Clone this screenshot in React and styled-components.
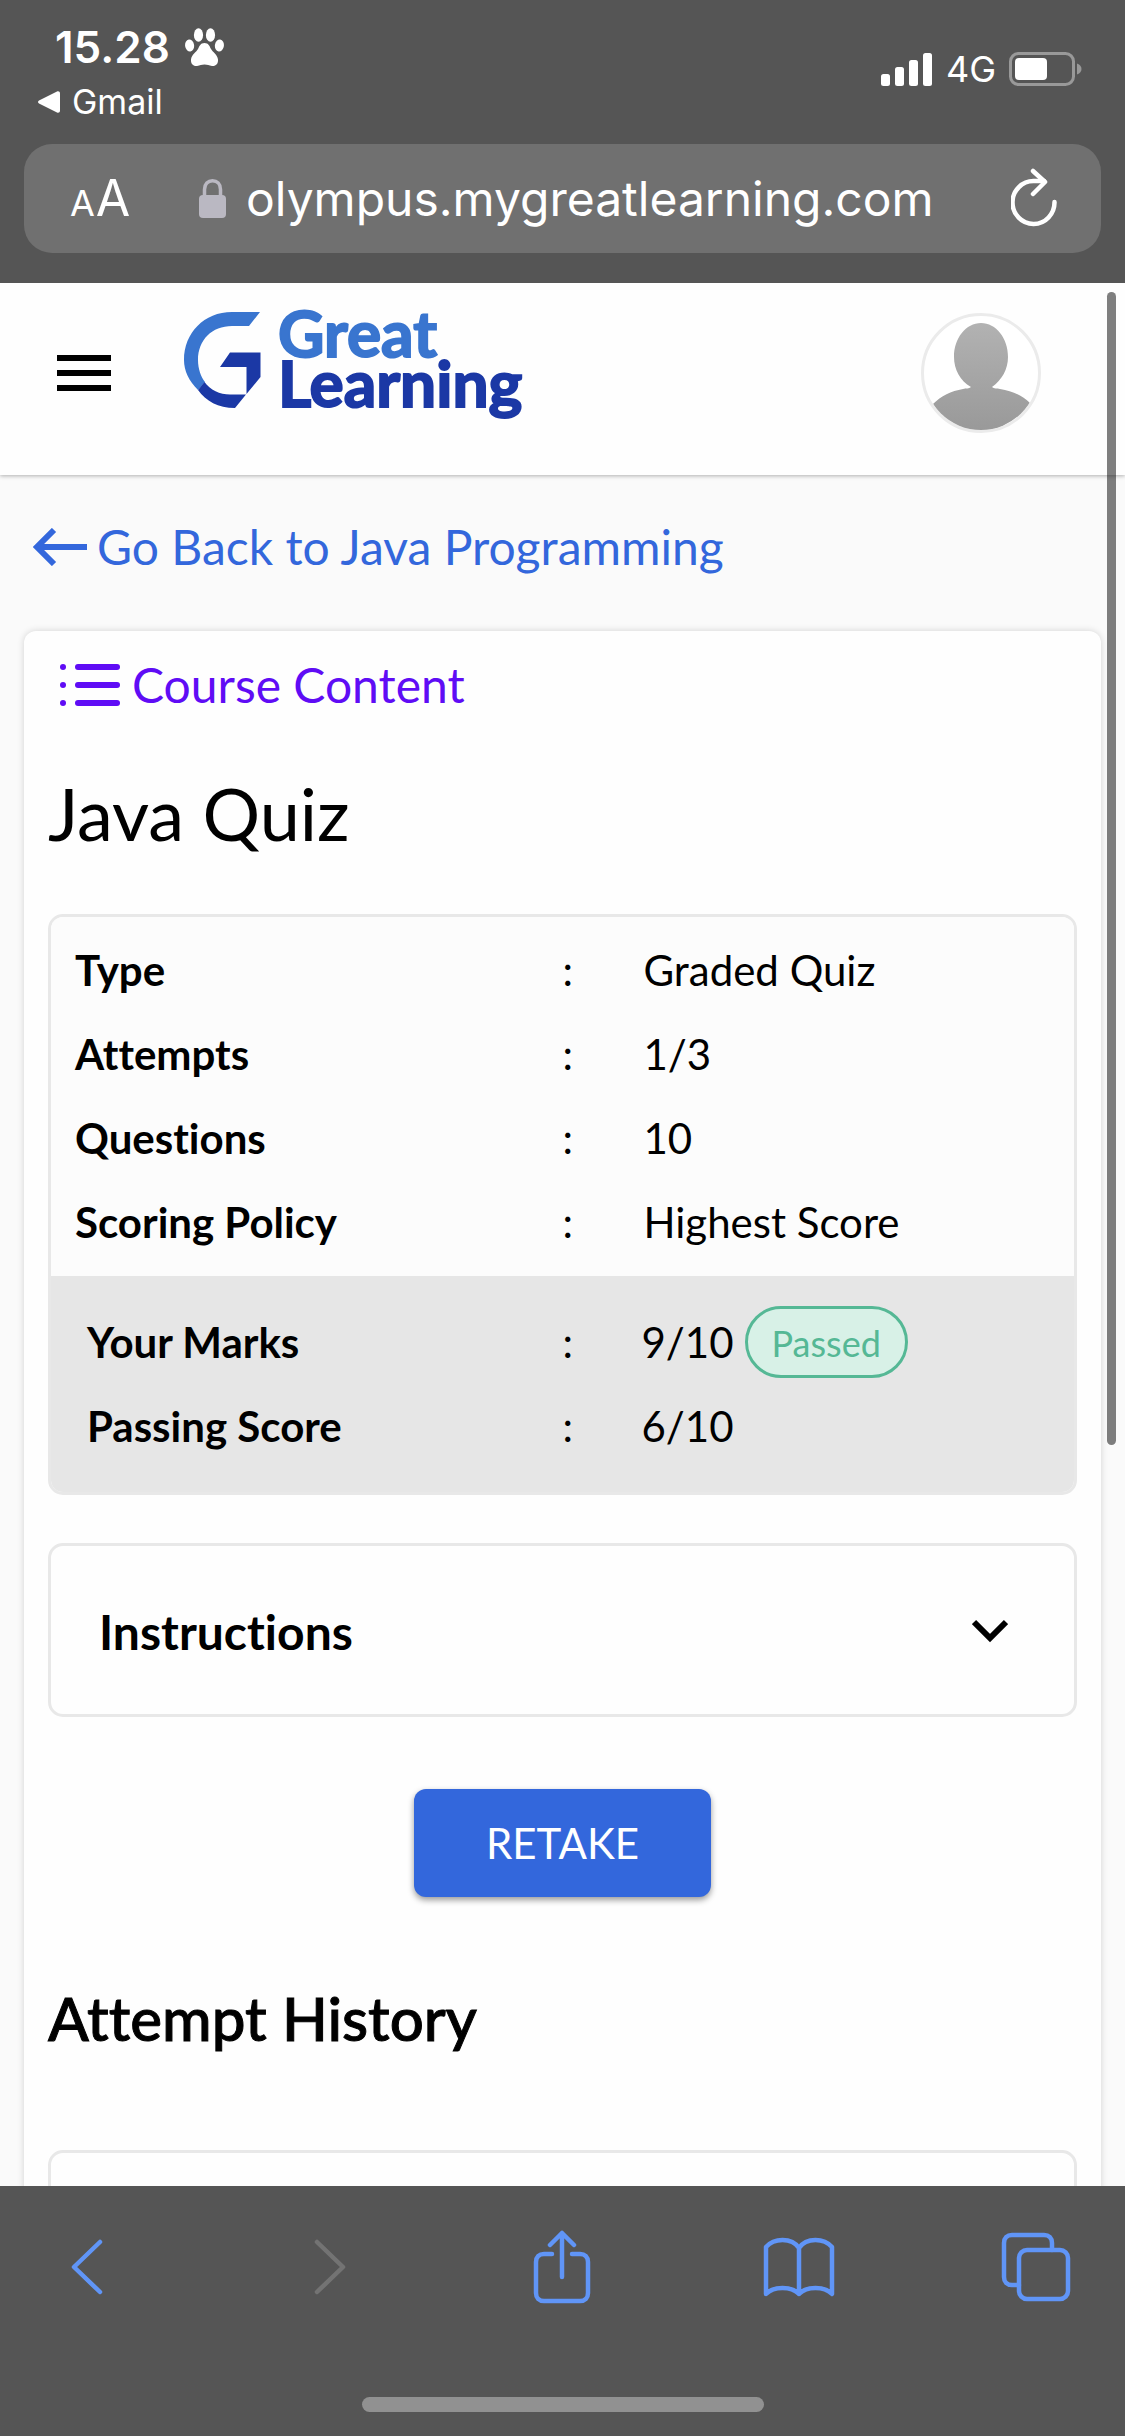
import React from 'react';
import styled, { createGlobalStyle } from 'styled-components';

const ui = '"Inter", "Liberation Sans", sans-serif';
const body = '"Lato", "Open Sans", sans-serif';

const GlobalStyle = createGlobalStyle`
  *, *::before, *::after { box-sizing: border-box; }
  body { margin: 0; background: #555; font-family: ${body}; color: #000; font-variant-ligatures: none; }
  button, input { font: inherit; font-variant-ligatures: none; color: inherit; background: none; border: 0; padding: 0; margin: 0; }
  h1, h2 { margin: 0; }
  svg { display: block; flex: none; }
`;

const Screen = styled.div`
  display: flex;
  flex-direction: column;
  height: 100vh;
`;

/* Browser chrome */
const TopBar = styled.header`
  flex: none;
  background: #555;
  color: #fff;
  font-family: ${ui};
  padding: 22px 24px 30px;
`;
const StatusRow = styled.div`
  display: flex;
  justify-content: space-between;
  align-items: flex-start;
  height: 122px;
`;
const StatusLeft = styled.div`
  padding-left: 14px;
`;
const Clock = styled.div`
  display: flex;
  align-items: center;
  gap: 15px;
  padding-left: 17px;
  font-size: 44px;
  line-height: 50px;
  font-weight: 600;
`;
const ReturnLink = styled.a`
  display: flex;
  align-items: center;
  gap: 12px;
  margin-top: 9px;
  font-size: 34px;
  line-height: 42px;
  color: inherit;
  text-decoration: none;
`;
const StatusRight = styled.div`
  display: flex;
  align-items: center;
  gap: 13px;
  padding: 25px 19px 0 0;
  font-size: 36px;
  line-height: 44px;
`;
const AddressBar = styled.div`
  display: flex;
  align-items: center;
  height: 109px;
  padding: 0 44px 0 46px;
  border-radius: 28px;
  background: #707070;
`;
const TextSizeButton = styled.button`
  display: flex;
  align-items: baseline;
  gap: 1px;
  width: 129px;
  padding-top: 3px;
  line-height: 60px;
`;
const Letter = styled.span`
  font-size: ${(p) => (p.$large ? 50 : 36)}px;
`;
const UrlField = styled.input`
  flex: 1;
  min-width: 0;
  height: 72px;
  margin-left: 20px;
  font-size: 48px;
  outline: none;
`;
const IconButton = styled.button`
  display: flex;
  align-items: center;
  justify-content: center;
`;

/* Site */
const Viewport = styled.div`
  position: relative;
  flex: 1;
  min-height: 0;
  overflow: hidden;
  background: #fafafa;
`;
const ScrollThumb = styled.div`
  position: absolute;
  z-index: 2;
  top: 9px;
  right: 9px;
  width: 9px;
  height: 1153px;
  border-radius: 5px;
  background: rgba(0, 0, 0, 0.5);
`;
const SiteHeader = styled.div`
  display: flex;
  align-items: center;
  height: 192px;
  padding: 0 84px 12px 57px;
  background: #fefefe;
  box-shadow: 0 1px 4px rgba(0, 0, 0, 0.3);
`;
const LogoLink = styled.a`
  display: flex;
  align-items: flex-end;
  gap: 17px;
  margin: 0 auto 0 73px;
  padding-bottom: 30px;
  font-size: 64px;
  line-height: 50px;
  font-weight: 700;
  -webkit-text-stroke: 2px currentColor;
  text-decoration: none;
`;
const LogoWord = styled.span`
  display: block;
  color: ${(p) => p.$tone};
  -webkit-text-stroke-color: ${(p) => p.$tone};
`;
const Avatar = styled.button`
  width: 120px;
  height: 120px;
  border: 3px solid #ebebeb;
  border-radius: 50%;
  background: #fff;
  overflow: hidden;
`;
const BackLink = styled.a`
  display: flex;
  align-items: center;
  gap: 9px;
  padding: 42px 33px 54px;
  font-size: 48px;
  line-height: 60px;
  color: #3367dc;
  text-decoration: none;
`;
const Card = styled.main`
  margin: 0 24px;
  padding: 24px 24px 90px;
  border-radius: 12px;
  background: #fefefe;
  box-shadow: 0 0 7px rgba(0, 0, 0, 0.16);
`;
const ContentLink = styled.a`
  display: flex;
  align-items: center;
  gap: 12px;
  padding-left: 12px;
  font-size: 48px;
  line-height: 60px;
  color: #5f0cf5;
  text-decoration: none;
`;
const Title = styled.h1`
  margin: 56px 0 59px;
  font-size: 72px;
  line-height: 84px;
  font-weight: 400;
`;
const Panel = styled.section`
  border: 3px solid #e8e8e8;
  border-radius: 15px;
  overflow: hidden;
`;
const Facts = styled.table`
  width: 100%;
  table-layout: fixed;
  border-collapse: collapse;
  font-size: 42px;
  line-height: 48px;
`;
const Group = styled.div`
  padding: ${(p) => (p.$shaded ? '24px 0 24px' : '11px 0 12px')};
  background: ${(p) => (p.$shaded ? '#e6e6e6' : '#fcfcfc')};
`;
const Label = styled.th`
  width: 50%;
  height: 84px;
  padding: 0 0 0 ${(p) => (p.$shaded ? 36 : 24)}px;
  text-align: left;
  font-weight: 700;
`;
const Colon = styled.td`
  width: ${(p) => (p.$shaded ? 79 : 81)}px;
  padding: 0;
`;
const Value = styled.td`
  padding: 0;
`;
const ValueLine = styled.div`
  display: flex;
  align-items: center;
  gap: 11px;
`;
const Pill = styled.span`
  height: 72px;
  padding: 0 24px;
  border: 3px solid #55b895;
  border-radius: 36px;
  background: #d8f1e7;
  color: #55b895;
  font-size: 36px;
  line-height: 68px;
`;
const Accordion = styled.button`
  display: flex;
  align-items: center;
  justify-content: space-between;
  width: 100%;
  height: 174px;
  margin-top: 48px;
  padding: 2px 66px 0 48px;
  border: 3px solid #e8e8e8;
  border-radius: 15px;
  font-size: 48px;
  font-weight: 700;
`;
const Retake = styled.button`
  display: block;
  width: 297px;
  height: 108px;
  margin: 72px auto 85px;
  border-radius: 12px;
  background: #3367dc;
  color: #fff;
  font-size: 42px;
  box-shadow: 0 3px 6px rgba(0, 0, 0, 0.4);
`;
const Subtitle = styled.h2`
  margin-bottom: 96px;
  font-size: 60px;
  line-height: 72px;
  font-weight: 500;
  -webkit-text-stroke: 1px currentColor;
`;
const HistoryPanel = styled(Panel)`
  height: 240px;
`;

const BottomBar = styled.footer`
  flex: none;
  height: 250px;
  background: #555;
`;
const Tools = styled.nav`
  display: flex;
  justify-content: space-between;
  align-items: center;
  padding: 38px 53px 0 51px;
  height: 124px;
`;
const ToolButton = styled(IconButton)`
  width: 72px;
  height: 84px;
  color: ${(p) => (p.disabled ? '#737373' : '#6095f7')};
`;
const HomeIndicator = styled.div`
  width: 402px;
  height: 15px;
  margin: 87px auto 0;
  border-radius: 8px;
  background: #919191;
`;

const Paw = () => (
  <svg width="39" height="39" viewBox="0 0 39 39" fill="#fff" aria-hidden="true">
    <ellipse cx="4.6" cy="17.5" rx="4.5" ry="6" transform="rotate(-8 4.6 17.5)" />
    <ellipse cx="13.5" cy="7" rx="4.6" ry="6.8" />
    <ellipse cx="25.5" cy="7" rx="4.6" ry="6.8" />
    <ellipse cx="34.4" cy="17.5" rx="4.5" ry="6" transform="rotate(8 34.4 17.5)" />
    <path d="M19.500 15c-4 0-5 3-6.500 6-1.500 3-6.500 5.500-7 10.500C5.600 36 8.500 38.500 12 38c3-.4 4.500-1.500 7.500-1.500s4.500 1.100 7.500 1.500c3.500.5 6.400-2 6-6.500-.5-5-5.500-7.500-7-10.500S23.500 15 19.500 15z" />
  </svg>
);
const Signal = () => (
  <svg width="52" height="33" viewBox="0 0 52 33" fill="#fff" aria-hidden="true">
    <rect x="0" y="21" width="9" height="12" rx="2.500" />
    <rect x="14" y="14" width="9" height="19" rx="2.500" />
    <rect x="28" y="7" width="9" height="26" rx="2.500" />
    <rect x="42" y="0" width="9" height="33" rx="2.500" />
  </svg>
);
const Battery = () => (
  <svg width="73" height="34" viewBox="0 0 73 34" aria-hidden="true">
    <rect x="1.500" y="1.500" width="63" height="31" rx="8" fill="none" stroke="#999" strokeWidth="3" />
    <rect x="6" y="6" width="32" height="22" rx="4" fill="#fff" />
    <path d="M68 11.500c3 1 4.500 3 4.500 5.500s-1.500 4.500-4.500 5.500z" fill="#999" />
  </svg>
);
const Lock = () => (
  <svg width="27" height="39" viewBox="0 0 27 39" aria-hidden="true">
    <path d="M5.500 18v-7.500C5.500 5 9 1.800 13.500 1.800S21.500 5 21.500 10.500V18" fill="none" stroke="#bab8c2" strokeWidth="3.500" />
    <rect y="16" width="27" height="23" rx="4" fill="#bab8c2" />
  </svg>
);
const Reload = () => (
  <svg width="46" height="62" viewBox="0 0 46 62" fill="none" stroke="#fff" strokeWidth="4.500" strokeLinecap="round" strokeLinejoin="round" aria-hidden="true">
    <path d="M43.500 34A21 21.500 0 1 1 23 13h10" />
    <path d="M22 3 34 14 22 26" />
  </svg>
);
const MenuIcon = () => (
  <svg width="54" height="36" viewBox="0 0 54 36" aria-hidden="true">
    <path d="M0 3h54M0 18h54M0 33h54" stroke="#000" strokeWidth="6" />
  </svg>
);
const LogoMark = () => (
  <svg width="77" height="96" viewBox="0 0 77 96" aria-hidden="true">
    <path d="M76 0H48C20 0 0 21 0 48c0 11 5 21 14 30l7-8c-4-5-7-13-7-22 0-20 14-34 34-34h17z" fill="#3975cf" />
    <path d="M20.500 70 14 78c8 11 20 18 37 18L62 82.500H46C36 82.500 26 78 20.500 70z" fill="#1b38a5" />
    <path d="M46 40.500h30.500V65L62.500 82V55H36z" fill="#1b38a5" />
  </svg>
);
const Person = () => (
  <svg width="114" height="114" viewBox="0 0 114 114" aria-hidden="true">
    <defs>
      <linearGradient id="person" x1="0" y1="0" x2="0" y2="1">
        <stop offset="0" stopColor="#b2b2b2" />
        <stop offset="1" stopColor="#999" />
      </linearGradient>
    </defs>
    <path
      d="M57 7c15 0 27 15 27 34 0 12-6 23-16 30 2 2 5 1 8 2 13 2 23 7 30 14C96 103 77 115 57 115S18 104 9 88c8-8 18-13 30-15 3-1 6 0 8-2C36 65 30 53 30 41 30 22 42 7 57 7z"
      fill="url(#person)"
    />
  </svg>
);
const BackArrow = () => (
  <svg width="55" height="38" viewBox="0 0 55 38" fill="none" stroke="#3367dc" strokeWidth="6" aria-hidden="true">
    <path d="M21 2 4 19l17 17M4 19h50" />
  </svg>
);
const ListIcon = () => (
  <svg width="60" height="43" viewBox="0 0 60 43" fill="#5f0cf5" aria-hidden="true">
    {[3, 21, 39].map((y) => (
      <g key={y}>
        <circle cx="3" cy={y} r="3" />
        <rect x="15" y={y - 3} width="45" height="6" rx="3" />
      </g>
    ))}
  </svg>
);
const ChevronDown = () => (
  <svg width="36" height="24" viewBox="0 0 36 24" fill="none" stroke="#000" strokeWidth="6" aria-hidden="true">
    <path d="M2 3l16 16L34 3" />
  </svg>
);
const Stroke = ({ w, h, children }) => (
  <svg width={w} height={h} viewBox={`0 0 ${w} ${h}`} fill="none" stroke="currentColor" strokeWidth="4.500" strokeLinecap="round" strokeLinejoin="round" aria-hidden="true">
    {children}
  </svg>
);

const details = [
  ['Type', 'Graded Quiz'],
  ['Attempts', '1/3'],
  ['Questions', '10'],
  ['Scoring Policy', 'Highest Score'],
];
const scores = [
  ['Your Marks', '9/10', 'Passed'],
  ['Passing Score', '6/10'],
];

const FactGroup = ({ rows, shaded }) => (
  <Group $shaded={shaded}>
    <Facts>
      <tbody>
        {rows.map(([label, value, tag]) => (
          <tr key={label}>
            <Label scope="row" $shaded={shaded}>{label}</Label>
            <Colon $shaded={shaded}>:</Colon>
            <Value>
              <ValueLine>
                {value}
                {tag && <Pill>{tag}</Pill>}
              </ValueLine>
            </Value>
          </tr>
        ))}
      </tbody>
    </Facts>
  </Group>
);

export default function App() {
  return (
    <Screen>
      <GlobalStyle />
      <TopBar>
        <StatusRow>
          <StatusLeft>
            <Clock>15.28 <Paw /></Clock>
            <ReturnLink href="#gmail">
              <svg width="22" height="22" viewBox="0 0 22 22" fill="#fff" aria-hidden="true">
                <path d="M1 9.500 19 .6c1.500-.7 3 .2 3 1.700v17.400c0 1.500-1.500 2.400-3 1.700L1 12.500c-1.300-.8-1.300-2.200 0-3z" />
              </svg>
              Gmail
            </ReturnLink>
          </StatusLeft>
          <StatusRight>
            <Signal />
            4G
            <Battery />
          </StatusRight>
        </StatusRow>
        <AddressBar>
          <TextSizeButton aria-label="Text size">
            <Letter>A</Letter>
            <Letter $large>A</Letter>
          </TextSizeButton>
          <Lock />
          <UrlField aria-label="Address" readOnly value="olympus.mygreatlearning.com" />
          <IconButton aria-label="Reload"><Reload /></IconButton>
        </AddressBar>
      </TopBar>

      <Viewport>
        <ScrollThumb />
        <SiteHeader>
          <IconButton aria-label="Menu"><MenuIcon /></IconButton>
          <LogoLink href="#home">
            <LogoMark />
            <span>
              <LogoWord $tone="#3975cf">Great</LogoWord>
              <LogoWord $tone="#1b38a5">Learning</LogoWord>
            </span>
          </LogoLink>
          <Avatar aria-label="Profile"><Person /></Avatar>
        </SiteHeader>
        <BackLink href="#course"><BackArrow />Go Back to Java Programming</BackLink>
        <Card>
          <ContentLink href="#content"><ListIcon />Course Content</ContentLink>
          <Title>Java Quiz</Title>
          <Panel>
            <FactGroup rows={details} />
            <FactGroup rows={scores} shaded />
          </Panel>
          <Accordion aria-expanded="false">Instructions<ChevronDown /></Accordion>
          <Retake>RETAKE</Retake>
          <Subtitle>Attempt History</Subtitle>
          <HistoryPanel />
        </Card>
      </Viewport>

      <BottomBar>
        <Tools>
          <ToolButton aria-label="Back">
            <Stroke w={34} h={58}><path d="M30 4 4 29l26 25" /></Stroke>
          </ToolButton>
          <ToolButton aria-label="Forward" disabled>
            <Stroke w={46} h={58}><path d="M16 4l26 25L16 54" /></Stroke>
          </ToolButton>
          <ToolButton aria-label="Share">
            <Stroke w={58} h={74}>
              <path d="M19 24h-8c-5 0-8 3-8 8v31c0 5 3 8 8 8h36c5 0 8-3 8-8V32c0-5-3-8-8-8h-8" />
              <path d="M29 47V3M17 15 29 3l12 12" />
            </Stroke>
          </ToolButton>
          <ToolButton aria-label="Bookmarks">
            <Stroke w={72} h={60}>
              <path d="M36 11C32 5 26 3 19.500 3S7 5.500 3 10v47c4-4 10-6 16.500-6S32 53 36 57c4-4 10-6 16.500-6S65 53 69 57V10C65 5.500 59 3 52.500 3S40 5 36 11zv46" />
            </Stroke>
          </ToolButton>
          <ToolButton aria-label="Tabs">
            <Stroke w={70} h={70}>
              <path d="M18 53H11c-5 0-8-3-8-8V11c0-5 3-8 8-8h32c5 0 8 3 8 8v7" />
              <rect x="18" y="18" width="49" height="49" rx="8" />
            </Stroke>
          </ToolButton>
        </Tools>
        <HomeIndicator />
      </BottomBar>
    </Screen>
  );
}
